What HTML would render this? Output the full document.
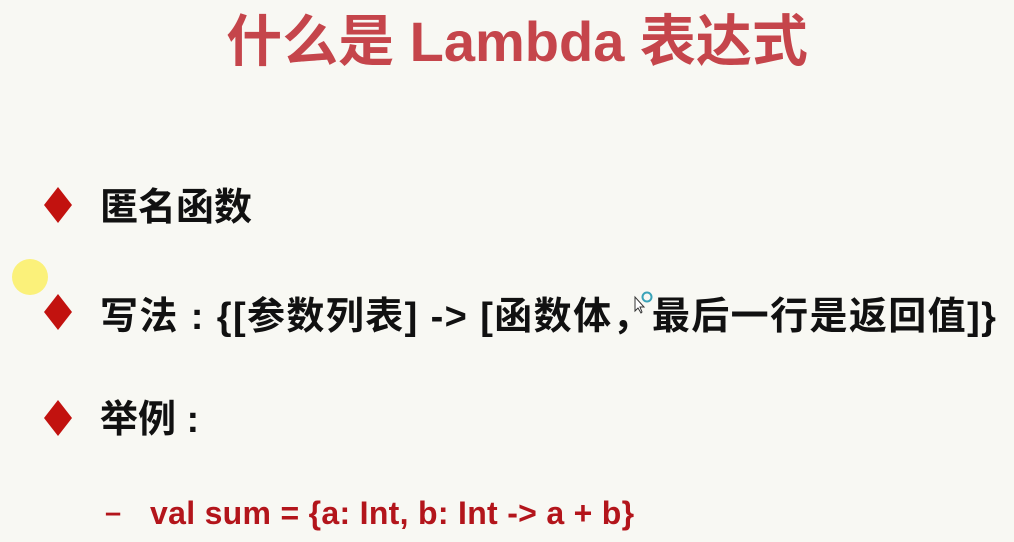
<!DOCTYPE html>
<html><head><meta charset="utf-8"><style>
html,body{margin:0;padding:0}
body{width:1014px;height:542px;background:#f8f8f3;position:relative;overflow:hidden;font-family:"Liberation Sans","Noto Sans CJK SC",sans-serif;font-weight:bold}
.t{position:absolute;left:0;width:1014px;top:10px;text-align:center;font-size:56px;color:#c5454b;line-height:64px;padding-left:20px;box-sizing:border-box}
.d{position:absolute;left:44px;width:28px;height:36px}
.r{position:absolute;left:100px;font-size:38px;color:#111;line-height:44px;white-space:nowrap}
.c{position:absolute;left:150px;top:494px;font-size:32px;color:#b3151b;line-height:38px;white-space:nowrap;font-weight:bold;letter-spacing:0.3px}
.dash{position:absolute;left:105px;top:494px;font-size:29px;color:#b3151b;line-height:38px}
.y{position:absolute;left:12px;top:259px;width:36px;height:36px;border-radius:50%;background:#fbf17a}
</style></head><body>
<div class="t">什么是 Lambda 表达式</div>
<svg class="d" style="top:187px" viewBox="0 0 28 36"><path d="M14 0L28 18L14 36L0 18Z" fill="#c2120f"/></svg>
<svg class="d" style="top:294px" viewBox="0 0 28 36"><path d="M14 0L28 18L14 36L0 18Z" fill="#c2120f"/></svg>
<svg class="d" style="top:400px" viewBox="0 0 28 36"><path d="M14 0L28 18L14 36L0 18Z" fill="#c2120f"/></svg>
<div class="y"></div>
<div class="r" style="top:186px">匿名函数</div>
<div class="r" style="top:295px;letter-spacing:1.4px">写法 : {[参数列表] -&gt; [函数体，最后一行是返回值]}</div>
<div class="r" style="top:398px">举例 :</div>
<div class="dash">–</div>
<div class="c">val sum = {a: Int, b: Int -&gt; a + b}</div>
<svg style="position:absolute;left:634px;top:291px" width="20" height="24" viewBox="0 0 20 24"><circle cx="13" cy="6" r="4.5" fill="none" stroke="#3aa3b8" stroke-width="2"/><path d="M1 6L1 20L4 17L7 22L8 21L6 16L10 16Z" fill="#fff" stroke="#333" stroke-width="1"/></svg>
</body></html>
